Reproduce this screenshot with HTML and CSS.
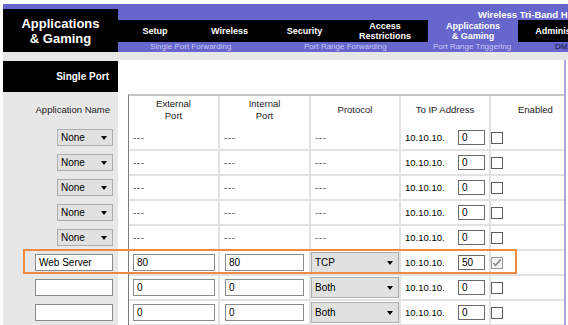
FILE: index.html
```html
<!DOCTYPE html>
<html>
<head>
<meta charset="utf-8">
<link rel="stylesheet" href="styles.css">
</head>
<body>
<div class="page">
  <header class="top">
    <div class="logo"><span>Applications</span><span>&amp; Gaming</span></div>
    <div class="topright">
      <div class="product">Wireless Tri-Band Home Router</div>
      <nav class="tabs">
        <div class="tab w-setup">Setup</div>
        <div class="tab w-wireless">Wireless</div>
        <div class="tab w-security">Security</div>
        <div class="tab w-access">Access<br>Restrictions</div>
        <div class="tab w-apps tab-active">Applications<br>&amp; Gaming</div>
        <div class="tab w-admin">Administration</div>
      </nav>
      <div class="subtabs">
        <span class="sub sub-1">Single Port Forwarding</span>
        <span class="sub sub-2">Port Range Forwarding</span>
        <span class="sub sub-3">Port Range Triggering</span>
        <span class="sub sub-4">DMZ</span>
      </div>
    </div>
  </header>
  <div class="band"></div>
  <div class="content">
    <aside class="side">
      <div class="section-title">Single Port</div>
      <div class="side-head">Application Name</div>
      <div class="side-row"><div class="sel sel-name"><span>None</span><i class="arrow"></i></div></div>
      <div class="side-row"><div class="sel sel-name"><span>None</span><i class="arrow"></i></div></div>
      <div class="side-row"><div class="sel sel-name"><span>None</span><i class="arrow"></i></div></div>
      <div class="side-row"><div class="sel sel-name"><span>None</span><i class="arrow"></i></div></div>
      <div class="side-row"><div class="sel sel-name"><span>None</span><i class="arrow"></i></div></div>
      <div class="side-row"><div class="inp inp-name">Web Server</div></div>
      <div class="side-row"><div class="inp inp-name"></div></div>
      <div class="side-row"><div class="inp inp-name"></div></div>
    </aside>
    <section class="main">
      <div class="grid">
        <div class="hc">External<br>Port</div>
        <div class="hc">Internal<br>Port</div>
        <div class="hc">Protocol</div>
        <div class="hc">To IP Address</div>
        <div class="hc hc-last">Enabled</div>

        <div class="c"><span class="dash">---</span></div>
        <div class="c"><span class="dash">---</span></div>
        <div class="c"><span class="dash">---</span></div>
        <div class="c"><span class="ip-text">10.10.10.</span><div class="inp inp-ip">0</div></div>
        <div class="c c-last"><div class="cb"></div></div>

        <div class="c"><span class="dash">---</span></div>
        <div class="c"><span class="dash">---</span></div>
        <div class="c"><span class="dash">---</span></div>
        <div class="c"><span class="ip-text">10.10.10.</span><div class="inp inp-ip">0</div></div>
        <div class="c c-last"><div class="cb"></div></div>

        <div class="c"><span class="dash">---</span></div>
        <div class="c"><span class="dash">---</span></div>
        <div class="c"><span class="dash">---</span></div>
        <div class="c"><span class="ip-text">10.10.10.</span><div class="inp inp-ip">0</div></div>
        <div class="c c-last"><div class="cb"></div></div>

        <div class="c"><span class="dash">---</span></div>
        <div class="c"><span class="dash">---</span></div>
        <div class="c"><span class="dash">---</span></div>
        <div class="c"><span class="ip-text">10.10.10.</span><div class="inp inp-ip">0</div></div>
        <div class="c c-last"><div class="cb"></div></div>

        <div class="c"><span class="dash">---</span></div>
        <div class="c"><span class="dash">---</span></div>
        <div class="c"><span class="dash">---</span></div>
        <div class="c"><span class="ip-text">10.10.10.</span><div class="inp inp-ip">0</div></div>
        <div class="c c-last"><div class="cb"></div></div>

        <div class="c"><div class="inp inp-ext">80</div></div>
        <div class="c"><div class="inp inp-int">80</div></div>
        <div class="c c-proto"><div class="sel sel-proto"><span>TCP</span><i class="arrow"></i></div></div>
        <div class="c"><span class="ip-text">10.10.10.</span><div class="inp inp-ip">50</div></div>
        <div class="c c-last"><div class="cb cb-on"><svg viewBox="0 0 11 11" width="10" height="10"><path d="M1.5 5.5 L4 8 L9.5 1.8" fill="none" stroke="#8a8a8a" stroke-width="1.8"/></svg></div></div>

        <div class="c"><div class="inp inp-ext">0</div></div>
        <div class="c"><div class="inp inp-int">0</div></div>
        <div class="c c-proto"><div class="sel sel-proto"><span>Both</span><i class="arrow"></i></div></div>
        <div class="c"><span class="ip-text">10.10.10.</span><div class="inp inp-ip">0</div></div>
        <div class="c c-last"><div class="cb"></div></div>

        <div class="c"><div class="inp inp-ext">0</div></div>
        <div class="c"><div class="inp inp-int">0</div></div>
        <div class="c c-proto"><div class="sel sel-proto"><span>Both</span><i class="arrow"></i></div></div>
        <div class="c"><span class="ip-text">10.10.10.</span><div class="inp inp-ip">0</div></div>
        <div class="c c-last"><div class="cb"></div></div>
      </div>
    </section>
  </div>
  <div class="highlight"></div>
</div>
</body>
</html>
```

FILE: styles.css
```css
* { box-sizing: border-box; }
html, body { margin: 0; padding: 0; background: #fff; }
body { font-family: "Liberation Sans", Arial, sans-serif; overflow: hidden; }

.page { position: relative; margin-left: 3px; width: 565px; height: 325px; overflow: hidden; }

.top { margin-top: 4px; height: 48px; background: #6666cc; display: flex; }
.logo {
  width: 115px; flex: none; margin-top: 5px; background: #000; color: #fff;
  font: bold 13px/15px "Liberation Sans", Arial, sans-serif;
  display: flex; flex-direction: column; align-items: center; justify-content: center;
}
.topright { flex: 1; min-width: 0; overflow: hidden; }
.product {
  height: 16px; padding: 5px 0 0 360px; color: #fff; white-space: nowrap;
  font: bold 9.5px/11px "Liberation Sans", Arial, sans-serif;
}
.tabs { height: 22px; display: flex; background: #000; }
.tab {
  flex: none; display: flex; align-items: center; justify-content: center; text-align: center;
  color: #fff; font: bold 9px/10px "Liberation Sans", Arial, sans-serif; white-space: nowrap;
}
.w-setup { width: 74px; }
.w-wireless { width: 75px; }
.w-security { width: 75px; }
.w-access { width: 86px; }
.w-apps { width: 90px; }
.w-admin { width: 98px; }
.tab-active { background: #6666cc; }

.subtabs { height: 10px; display: flex; font: 8px/10px "Liberation Sans", Arial, sans-serif; color: #c8c8f4; white-space: nowrap; }
.sub { flex: none; }
.sub-1 { width: 186px; padding-left: 32px; }
.sub-2 { width: 129px; }
.sub-3 { width: 122px; }
.sub-4 { color: #14143c; }

.band { height: 8px; background: #e7e7e7; }

.content { display: flex; }
.side { width: 115px; flex: none; background: #e7e7e7; height: 265px; }
.section-title {
  margin-top: 1px; height: 31px; background: #000; color: #fff; text-align: right; padding-right: 9px;
  font: bold 10px/31px "Liberation Sans", Arial, sans-serif;
}
.side-head { height: 34px; display: flex; align-items: center; justify-content: flex-end; padding-right: 8px; font-size: 9.5px; color: #222; }
.side-row { height: 25px; padding: 0 5px 2px 0; display: flex; align-items: center; justify-content: flex-end; }

.main { width: 448px; flex: none; padding: 34px 0 0 10px; border-right: 2px solid #a8a8d8; height: 265px; }
.grid {
  display: grid; width: 436px;
  grid-template-columns: 91px 91px 90px 90px 73px;
  grid-template-rows: 30px repeat(8, 25px);
  border-top: 2px solid #c4c4c4; border-left: 1px solid #7c7c7c;
}
.hc {
  display: flex; align-items: center; justify-content: center; text-align: center;
  font-size: 9.5px; line-height: 12px; color: #222; padding-bottom: 3px;
  border-right: 2px solid #e2e2e2;
}
.hc-last { border-right: none; justify-content: flex-start; padding-left: 27px; }
.c {
  display: flex; align-items: center; padding-left: 4px;
  border-right: 2px solid #e2e2e2; border-bottom: 2px solid #e2e2e2;
  font-size: 9.5px; color: #000;
}
.c-last { border-right: none; padding-left: 0; }
.c-proto { padding-left: 0; }

.dash { font-size: 10px; color: #666; letter-spacing: 0.5px; }
.ip-text { width: 53px; flex: none; }

.inp {
  height: 17px; border: 1px solid #8a8a8a; background: #fff; color: #000;
  font-size: 10px; line-height: 15px; padding-left: 3px; white-space: nowrap;
}
.inp-name { width: 78px; }
.inp-ext { width: 82px; }
.inp-int { width: 79px; margin-left: 1px; }
.inp-ip { width: 27px; height: 15px; line-height: 13px; border-color: #6a6a6a; }

.sel {
  display: flex; align-items: center; justify-content: space-between;
  background: #e1e1e1; border: 1px solid #adadad; color: #000;
  font-size: 10px; padding: 0 5px 0 3px;
}
.sel-name { width: 56px; height: 17px; }
.sel-proto { width: 88px; height: 21px; }
.arrow {
  width: 0; height: 0; border-left: 3.5px solid transparent; border-right: 3.5px solid transparent;
  border-top: 4px solid #000;
}

.cb { width: 12px; height: 12px; border: 1px solid #5c5c5c; background: #fff; display: flex; align-items: center; justify-content: center; }
.cb-on { border-color: #9a9a9a; background: #f2f2f2; }

.highlight {
  position: absolute; left: 20px; top: 249px; width: 494px; height: 25px;
  border: 2px solid #ec8b45;
}
```
